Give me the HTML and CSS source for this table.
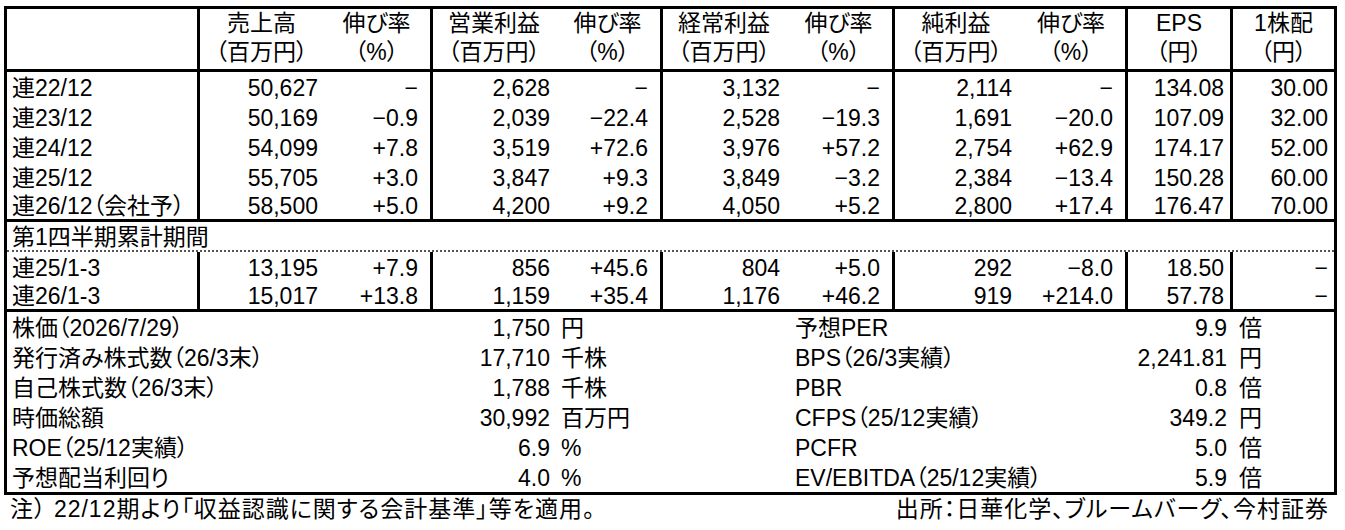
FILE: index.html
```html
<!DOCTYPE html>
<html lang="ja">
<head>
<meta charset="utf-8">
<link rel="stylesheet" href="styles.css">
</head>
<body>
<table class="fin">
  <colgroup>
    <col class="w-lbl"><col class="w-v1"><col class="w-g1"><col class="w-v2"><col class="w-g2"><col class="w-v3"><col class="w-g3"><col class="w-v4"><col class="w-g4"><col class="w-eps"><col class="w-div">
  </colgroup>
  <thead>
    <tr>
      <th class="dv"></th>
      <th>売上高<br>（百万円）</th><th class="dv">伸び率<br>（%）</th>
      <th>営業利益<br>（百万円）</th><th class="dv">伸び率<br>（%）</th>
      <th>経常利益<br>（百万円）</th><th class="dv">伸び率<br>（%）</th>
      <th>純利益<br>（百万円）</th><th class="dv">伸び率<br>（%）</th>
      <th class="dv">EPS<br>（円）</th>
      <th>1株配<br>（円）</th>
    </tr>
  </thead>
  <tbody>
    <tr>
      <td class="lbl dv">連22/12</td>
      <td class="v">50,627</td><td class="g dv">−</td>
      <td class="v">2,628</td><td class="g dv">−</td>
      <td class="v">3,132</td><td class="g dv">−</td>
      <td class="v">2,114</td><td class="g dv">−</td>
      <td class="e dv">134.08</td><td class="e">30.00</td>
    </tr>
    <tr>
      <td class="lbl dv">連23/12</td>
      <td class="v">50,169</td><td class="g dv">−0.9</td>
      <td class="v">2,039</td><td class="g dv">−22.4</td>
      <td class="v">2,528</td><td class="g dv">−19.3</td>
      <td class="v">1,691</td><td class="g dv">−20.0</td>
      <td class="e dv">107.09</td><td class="e">32.00</td>
    </tr>
    <tr>
      <td class="lbl dv">連24/12</td>
      <td class="v">54,099</td><td class="g dv">+7.8</td>
      <td class="v">3,519</td><td class="g dv">+72.6</td>
      <td class="v">3,976</td><td class="g dv">+57.2</td>
      <td class="v">2,754</td><td class="g dv">+62.9</td>
      <td class="e dv">174.17</td><td class="e">52.00</td>
    </tr>
    <tr>
      <td class="lbl dv">連25/12</td>
      <td class="v">55,705</td><td class="g dv">+3.0</td>
      <td class="v">3,847</td><td class="g dv">+9.3</td>
      <td class="v">3,849</td><td class="g dv">−3.2</td>
      <td class="v">2,384</td><td class="g dv">−13.4</td>
      <td class="e dv">150.28</td><td class="e">60.00</td>
    </tr>
    <tr class="end">
      <td class="lbl dv">連26/12（会社予）</td>
      <td class="v">58,500</td><td class="g dv">+5.0</td>
      <td class="v">4,200</td><td class="g dv">+9.2</td>
      <td class="v">4,050</td><td class="g dv">+5.2</td>
      <td class="v">2,800</td><td class="g dv">+17.4</td>
      <td class="e dv">176.47</td><td class="e">70.00</td>
    </tr>
    <tr class="sec">
      <td colspan="11" class="lbl">第1四半期累計期間</td>
    </tr>
    <tr>
      <td class="lbl dv">連25/1-3</td>
      <td class="v">13,195</td><td class="g dv">+7.9</td>
      <td class="v">856</td><td class="g dv">+45.6</td>
      <td class="v">804</td><td class="g dv">+5.0</td>
      <td class="v">292</td><td class="g dv">−8.0</td>
      <td class="e dv">18.50</td><td class="e">−</td>
    </tr>
    <tr class="end">
      <td class="lbl dv">連26/1-3</td>
      <td class="v">15,017</td><td class="g dv">+13.8</td>
      <td class="v">1,159</td><td class="g dv">+35.4</td>
      <td class="v">1,176</td><td class="g dv">+46.2</td>
      <td class="v">919</td><td class="g dv">+214.0</td>
      <td class="e dv">57.78</td><td class="e">−</td>
    </tr>
    <tr class="st">
      <td colspan="3" class="lbl">株価（2026/7/29）</td><td class="v">1,750</td><td class="u">円</td><td></td>
      <td colspan="3" class="rl">予想PER</td><td class="e">9.9</td><td class="u">倍</td>
    </tr>
    <tr class="st">
      <td colspan="3" class="lbl">発行済み株式数（26/3末）</td><td class="v">17,710</td><td class="u">千株</td><td></td>
      <td colspan="3" class="rl">BPS（26/3実績）</td><td class="e">2,241.81</td><td class="u">円</td>
    </tr>
    <tr class="st">
      <td colspan="3" class="lbl">自己株式数（26/3末）</td><td class="v">1,788</td><td class="u">千株</td><td></td>
      <td colspan="3" class="rl">PBR</td><td class="e">0.8</td><td class="u">倍</td>
    </tr>
    <tr class="st">
      <td colspan="3" class="lbl">時価総額</td><td class="v">30,992</td><td class="u">百万円</td><td></td>
      <td colspan="3" class="rl">CFPS（25/12実績）</td><td class="e">349.2</td><td class="u">円</td>
    </tr>
    <tr class="st">
      <td colspan="3" class="lbl">ROE（25/12実績）</td><td class="v">6.9</td><td class="u">%</td><td></td>
      <td colspan="3" class="rl">PCFR</td><td class="e">5.0</td><td class="u">倍</td>
    </tr>
    <tr class="st">
      <td colspan="3" class="lbl">予想配当利回り</td><td class="v">4.0</td><td class="u">%</td><td></td>
      <td colspan="3" class="rl">EV/EBITDA（25/12実績）</td><td class="e">5.9</td><td class="u">倍</td>
    </tr>
  </tbody>
</table>
<div class="foot">
  <span>注） 22/12期より「収益認識に関する会計基準」等を適用。</span>
  <span>出所：日華化学、ブルームバーグ、今村証券</span>
</div>
</body>
</html>
```
FILE: styles.css
```css
html, body {
  margin: 0;
  padding: 0;
  background: #fff;
}
body {
  font-family: "Liberation Sans", "Noto Sans CJK JP", sans-serif;
  font-size: 23px;
  font-feature-settings: "palt";
  color: #000;
}
.fin {
  margin: 6px 0 0 4px;
  width: 1333px;
  table-layout: fixed;
  border-collapse: separate;
  border-spacing: 0;
  border: 3px solid #000;
}
.w-lbl { width: 193px; }
.w-v1 { width: 123px; }
.w-g1 { width: 110px; }
.w-v2 { width: 122px; }
.w-g2 { width: 108px; }
.w-v3 { width: 122px; }
.w-g3 { width: 110px; }
.w-v4 { width: 122px; }
.w-g4 { width: 111px; }
.w-eps { width: 105px; }
.w-div { width: 101px; }

.fin th, .fin td {
  padding: 0;
  white-space: nowrap;
  font-weight: normal;
  vertical-align: middle;
}
.fin th {
  text-align: center;
  line-height: 29px;
  padding: 0 0 2px;
  border-bottom: 3px solid #000;
}
.fin td {
  line-height: 28px;
  padding-top: 2px;
}
.fin .dv { border-right: 3px solid #000; }
.fin .lbl { text-align: left; padding-left: 5px; }
.fin .v { text-align: right; padding-right: 5px; }
.fin .g { text-align: right; padding-right: 12px; }
.fin .e { text-align: right; padding-right: 6px; }
.fin .u { text-align: left; padding-left: 6px; }
.fin .rl { text-align: left; padding-left: 10px; }

.fin tr.end td {
  border-bottom: 3px solid #000;
  line-height: 25px;
}
.fin tr.sec td {
  border-bottom: 2px dotted #555;
  line-height: 26px;
}

.foot {
  width: 1333px;
  margin-left: 4px;
  display: flex;
  justify-content: space-between;
  line-height: 28px;
  padding: 0 8px 0 6px;
  box-sizing: border-box;
  letter-spacing: 1px;
}
```
